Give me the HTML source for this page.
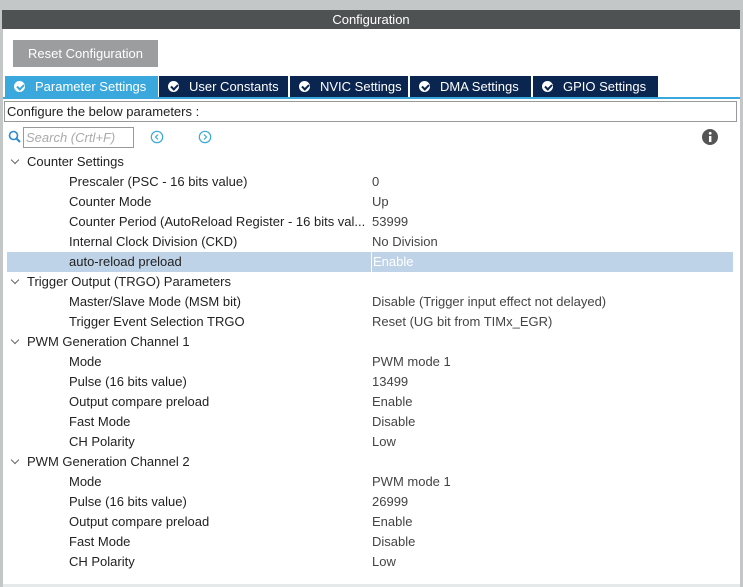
<!DOCTYPE html>
<html><head><meta charset="utf-8"><style>
*{margin:0;padding:0;box-sizing:border-box}
body{width:743px;height:587px;overflow:hidden;background:#fff;font-family:"Liberation Sans",sans-serif;position:relative;color:#222}
.abs{position:absolute}
.row{position:absolute;left:7px;width:726px;height:20px;font-size:13px;line-height:20px;white-space:nowrap;margin-top:1px}
.row .l{position:absolute;left:62px}
.row .v{position:absolute;left:365px;color:#444}
.row.g .l{left:20px;color:#222}
.row.g:before{content:"";position:absolute;left:5px;top:5px;width:5px;height:5px;border-right:1px solid #666;border-bottom:1px solid #666;transform:rotate(45deg)}
.row.sel{background:#bfd3e8}
.row.sel .v{color:#fff;border-left:1px solid #fff;left:364px;padding-left:1px}
.tab{position:absolute;top:76px;height:21px;background:#0a2550;color:#fff;font-size:13px;line-height:21px;padding-left:30px;white-space:nowrap}
.tab:before{content:"";position:absolute;left:9px;top:5px;width:11px;height:11px;border-radius:50%;background:#fff}
.tab:after{content:"";position:absolute;left:12px;top:8px;width:5px;height:3px;border-left:2px solid #0a2550;border-bottom:2px solid #0a2550;transform:rotate(-45deg)}
.tab.act{background:#3aa8dc}
.tab.act:after{border-color:#3aa8dc}
</style></head><body>
<div class="abs" style="left:0;top:0;width:743px;height:10px;background:#c3c7c8"></div>
<div class="abs" style="left:0;top:0;width:3px;height:587px;background:#c3c7c8"></div>
<div class="abs" style="left:740px;top:0;width:3px;height:587px;background:#c3c7c8"></div>
<div class="abs" style="left:2px;top:10px;width:738px;height:19px;background:#4f5252;color:#fff;font-size:13px;line-height:19px;text-align:center">Configuration</div>
<div class="abs" style="left:13px;top:40px;width:145px;height:27px;background:#9b9d9e;color:#fff;font-size:13px;line-height:27px;text-align:center">Reset Configuration</div>
<div class="tab act" style="left:5px;width:153px">Parameter Settings</div>
<div class="tab" style="left:159px;width:129px">User Constants</div>
<div class="tab" style="left:290px;width:118px">NVIC Settings</div>
<div class="tab" style="left:410px;width:121px">DMA Settings</div>
<div class="tab" style="left:533px;width:125px">GPIO Settings</div>
<div class="abs" style="left:3px;top:97px;width:737px;height:2px;background:#3aa8dc"></div>
<div class="abs" style="left:4px;top:101px;width:733px;height:21px;border:1px solid #999;font-size:13px;line-height:19px;padding-left:2px">Configure the below parameters :</div>
<svg class="abs" style="left:8px;top:130px" width="14" height="14"><circle cx="5.5" cy="5.5" r="4" fill="none" stroke="#2a8ad0" stroke-width="1.6"/><line x1="8.5" y1="8.5" x2="12" y2="12" stroke="#2a8ad0" stroke-width="2"/></svg>
<div class="abs" style="left:23px;top:127px;width:111px;height:21px;border:1px solid #999;font-size:13px;line-height:19px;padding-left:2px;color:#aaa;font-style:italic">Search (Crtl+F)</div>
<svg class="abs" style="left:150px;top:130px" width="14" height="14"><circle cx="7" cy="7" r="5.7" fill="none" stroke="#3aa8dc" stroke-width="1.2"/><path d="M8 4.5 5.5 7 8 9.5" fill="none" stroke="#3aa8dc" stroke-width="1.2"/></svg>
<svg class="abs" style="left:198px;top:130px" width="14" height="14"><circle cx="7" cy="7" r="5.7" fill="none" stroke="#3aa8dc" stroke-width="1.2"/><path d="M6 4.5 8.5 7 6 9.5" fill="none" stroke="#3aa8dc" stroke-width="1.2"/></svg>
<svg class="abs" style="left:702px;top:129px" width="16" height="16"><circle cx="8" cy="8" r="8" fill="#555"/><rect x="7" y="7" width="2.4" height="6" fill="#fff"/><circle cx="8.2" cy="4.3" r="1.4" fill="#fff"/></svg>

<div class="row g" style="top:151px"><span class="l">Counter Settings</span></div>
<div class="row" style="top:171px"><span class="l">Prescaler (PSC - 16 bits value)</span><span class="v">0</span></div>
<div class="row" style="top:191px"><span class="l">Counter Mode</span><span class="v">Up</span></div>
<div class="row" style="top:211px"><span class="l">Counter Period (AutoReload Register - 16 bits val...</span><span class="v">53999</span></div>
<div class="row" style="top:231px"><span class="l">Internal Clock Division (CKD)</span><span class="v">No Division</span></div>
<div class="row sel" style="top:251px"><span class="l">auto-reload preload</span><span class="v">Enable</span></div>
<div class="row g" style="top:271px"><span class="l">Trigger Output (TRGO) Parameters</span></div>
<div class="row" style="top:291px"><span class="l">Master/Slave Mode (MSM bit)</span><span class="v">Disable (Trigger input effect not delayed)</span></div>
<div class="row" style="top:311px"><span class="l">Trigger Event Selection TRGO</span><span class="v">Reset (UG bit from TIMx_EGR)</span></div>
<div class="row g" style="top:331px"><span class="l">PWM Generation Channel 1</span></div>
<div class="row" style="top:351px"><span class="l">Mode</span><span class="v">PWM mode 1</span></div>
<div class="row" style="top:371px"><span class="l">Pulse (16 bits value)</span><span class="v">13499</span></div>
<div class="row" style="top:391px"><span class="l">Output compare preload</span><span class="v">Enable</span></div>
<div class="row" style="top:411px"><span class="l">Fast Mode</span><span class="v">Disable</span></div>
<div class="row" style="top:431px"><span class="l">CH Polarity</span><span class="v">Low</span></div>
<div class="row g" style="top:451px"><span class="l">PWM Generation Channel 2</span></div>
<div class="row" style="top:471px"><span class="l">Mode</span><span class="v">PWM mode 1</span></div>
<div class="row" style="top:491px"><span class="l">Pulse (16 bits value)</span><span class="v">26999</span></div>
<div class="row" style="top:511px"><span class="l">Output compare preload</span><span class="v">Enable</span></div>
<div class="row" style="top:531px"><span class="l">Fast Mode</span><span class="v">Disable</span></div>
<div class="row" style="top:551px"><span class="l">CH Polarity</span><span class="v">Low</span></div>
<div class="abs" style="left:3px;top:584px;width:737px;height:3px;background:#e6e9ea"></div>
</body></html>
